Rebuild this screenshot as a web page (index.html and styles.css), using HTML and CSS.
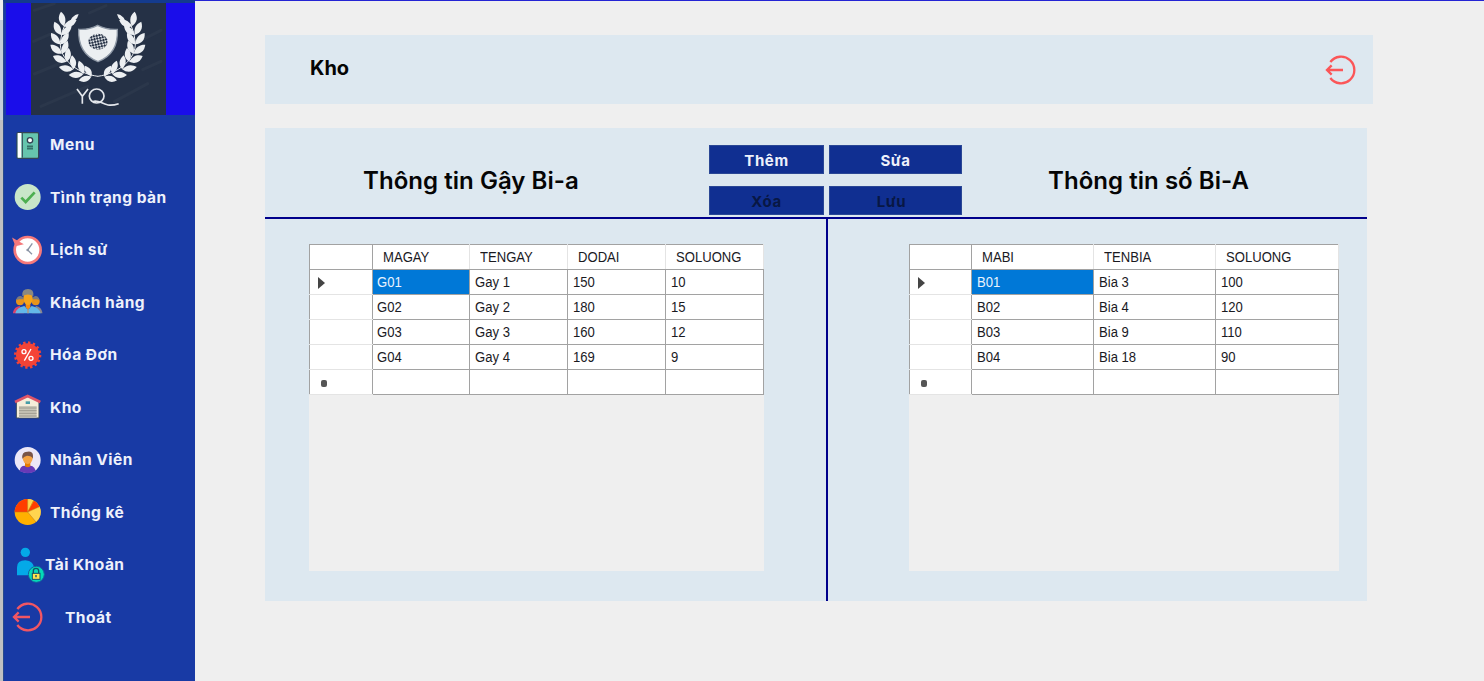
FILE: index.html
```html
<!DOCTYPE html>
<html lang="vi">
<head>
<meta charset="utf-8">
<title>Kho</title>
<link rel="stylesheet" href="styles.css">
</head>
<body>
<div class="edge"></div>
<aside class="sidebar">
  <div class="brand">
    <svg class="logo" viewBox="0 0 405 336">
      <defs>
        <g id="pair"><path d="M0 5C-19 4-30-9-28-29C-12-26-1-16 0 5Z"/><path d="M0 5C18 3 27-9 25-29C10-26 1-16 0 5Z"/></g>
        <g id="branch">
          <use href="#pair" transform="translate(177 219) rotate(-68) scale(.9)"/>
          <use href="#pair" transform="translate(153 210) rotate(-55)"/>
          <use href="#pair" transform="translate(124 195) rotate(-42)"/>
          <use href="#pair" transform="translate(104 172) rotate(-27)"/>
          <use href="#pair" transform="translate(92 147) rotate(-13)"/>
          <use href="#pair" transform="translate(88 119) rotate(0)"/>
          <use href="#pair" transform="translate(91 91) rotate(13)"/>
          <use href="#pair" transform="translate(101 65) rotate(28)"/>
          <path d="M101 66Q118 56 123 44Q136 32 143 34Q137 60 101 66Z"/>
          <path d="M201 220C140 212 86 170 88 119Q90 88 103 62" fill="none" stroke="#eceff2" stroke-width="3"/>
        </g>
        <pattern id="net" width="12" height="12" patternUnits="userSpaceOnUse" patternTransform="rotate(32)"><rect width="12" height="12" fill="#eceff2"/><rect width="7" height="7" fill="#253146"/><rect x="6" y="6" width="6" height="6" fill="#253146"/></pattern>
      </defs>
      <rect width="405" height="336" fill="#253146"/>
      <g fill="none" stroke="#2b374b" stroke-width="9" stroke-linecap="round"><path d="M10 22L70 2M8 115L82 83M10 213L90 180M30 310L170 250M175 30L225 8M250 296L350 242M330 112L390 82M335 200L390 175"/></g>
      <g fill="#eceff2"><use href="#branch"/><use href="#branch" transform="translate(401 0) scale(-1 1)"/>
      <path d="M143 79Q174 81 200 67Q227 81 259 79Q263 153 201 176Q140 153 143 79Z" stroke="#8e98a6" stroke-width="4"/></g>
      <ellipse cx="201" cy="116" rx="29" ry="24" fill="url(#net)"/>
      <g fill="none" stroke="#e4e7ec" stroke-width="5"><path d="M138 258L154 280L171 258M154 280V302"/><ellipse cx="197" cy="279" rx="22" ry="21"/><path d="M185 296C208 285 216 318 263 302"/></g>
    </svg>
  </div>
  <nav class="menu">
    <a class="item"><svg class="icon" viewBox="0 0 84 84"><rect x="9" y="5" width="65" height="77" rx="4" fill="#66c5ae" stroke="#344554" stroke-width="4"/><path d="M11 6H22V80H11Z" fill="#fff"/><path d="M25 6V80" stroke="#344554" stroke-width="3"/><circle cx="48" cy="28" r="8" fill="#fff" stroke="#344554" stroke-width="4"/><path d="M39 46H57M39 53H57" stroke="#347168" stroke-width="5"/></svg><span>Menu</span></a>
    <a class="item"><svg class="icon" viewBox="0 0 84 84"><circle cx="41" cy="42" r="39" fill="#c8e6c9"/><path d="M22 44L35 57L62 28" fill="none" stroke="#4caf50" stroke-width="8"/></svg><span>Tình trạng bàn</span></a>
    <a class="item"><svg class="icon" viewBox="0 0 84 84"><circle cx="41" cy="42" r="39" fill="#fff" stroke="#f5797b" stroke-width="8"/><path d="M-1 10L6 28L23 24Z" fill="#f5797b" stroke="#f5797b" stroke-width="5"/><path d="M55 22L41 42L54 55" fill="none" stroke="#8b94a5" stroke-width="4"/><circle cx="41" cy="42" r="4" fill="#8b94a5"/></svg><span>Lịch sử</span></a>
    <a class="item"><svg class="icon" viewBox="0 0 84 84"><path d="M-3 73Q0 57 17 54L30 76H-3Z" fill="#d8436d"/><path d="M85 73Q82 57 66 54L53 76H85Z" fill="#8a8790"/><circle cx="18" cy="40" r="12" fill="#e8941b"/><circle cx="65" cy="40" r="12" fill="#e8941b"/><path d="M8 36Q8 24 20 24Q29 26 28 34H15ZM75 36Q75 24 64 24Q55 26 56 34H69Z" fill="#7a7a80"/><path d="M35 44H49V58L42 66L35 58Z" fill="#f18c14"/><ellipse cx="42" cy="30" rx="14" ry="21" fill="#f6a51b"/><path d="M25 25Q22 3 42 3Q61 3 58 25Q42 14 25 25Z" fill="#8a8982"/><path d="M4 76Q8 58 31 54L42 66L53 54Q75 58 80 76Z" fill="#64b8e8"/><path d="M42 64V76" stroke="#a99a8b" stroke-width="5"/></svg><span>Khách hàng</span></a>
    <a class="item"><svg class="icon" viewBox="0 0 84 84"><circle cx="41" cy="42" r="35" fill="#f44336"/><circle cx="41" cy="42" r="37" fill="none" stroke="#f44336" stroke-width="8" stroke-dasharray="7 7.53"/><circle cx="30" cy="32" r="6" fill="none" stroke="#fff" stroke-width="4"/><circle cx="51" cy="52" r="6" fill="none" stroke="#fff" stroke-width="4"/><path d="M51 24L31 59" stroke="#fff" stroke-width="4"/></svg><span>Hóa Đơn</span></a>
    <a class="item"><svg class="icon" viewBox="0 0 84 84"><path d="M7 25L41 8L75 25V75H7Z" fill="#f5edd9" stroke="#39495a" stroke-width="3"/><path d="M3 27L41 9L79 27" fill="none" stroke="#dc5468" stroke-width="8"/><path d="M15 39H68V74H15Z" fill="#c9c6b7"/><path d="M15 45H68M15 53H68M15 61H68M15 69H68" stroke="#89877c" stroke-width="2"/><rect x="35" y="25" width="13" height="8" fill="#469da7"/></svg><span>Kho</span></a>
    <a class="item"><svg class="icon" viewBox="0 0 84 84"><circle cx="41" cy="42" r="39" fill="#ece8f7"/><path d="M17 76Q17 59 33 59H50Q62 61 65 75Q44 88 17 76Z" fill="#673ab7"/><path d="M33 48H49V61Q41 67 33 61Z" fill="#e67d00"/><ellipse cx="41" cy="36" rx="15" ry="18" fill="#f5a443"/><path d="M25 38Q22 16 41 17Q60 14 57 38Q53 29 39 29Q31 31 25 38Z" fill="#795548"/></svg><span>Nhân Viên</span></a>
    <a class="item"><svg class="icon" viewBox="0 0 84 84"><circle cx="41" cy="42" r="39" fill="#ffb000"/><path d="M41 42H2A39 39 0 0 1 41 3Z" fill="#ff3d00"/><path d="M41 42V3A39 39 0 0 1 58 7Z" fill="#ffd54f"/><path d="M41 42L60 8A39 39 0 0 1 77 26Z" fill="#ff3d00"/><path d="M41 42L77 26A39 39 0 0 1 66 72Z" fill="#ffd54f"/><path d="M2 42H41V3M41 42L66 72M41 42L59 7M41 42L77 26" fill="none" stroke="#b87722" stroke-width="1.5"/></svg><span>Thống kê</span></a>
    <a class="item account"><svg class="icon" viewBox="0 0 84 84"><circle cx="34" cy="4" r="14" fill="#04a9e8"/><path d="M9 73V49Q9 28 34 28Q60 30 60 53V73Z" fill="#04a9e8"/><circle cx="67" cy="70" r="24" fill="#04dab7" stroke="#11659f" stroke-width="3"/><path d="M58 67V59Q58 52 66 52Q74 52 74 59V67" fill="none" stroke="#14506b" stroke-width="4"/><rect x="55" y="67" width="23" height="18" fill="#ffe34c" stroke="#14506b" stroke-width="3"/><path d="M66 72V79" stroke="#14506b" stroke-width="4"/></svg><span>Tài Khoản</span></a>
    <a class="item exit"><svg class="icon" viewBox="0 0 84 84"><path d="M10 18A40 40 0 1 1 10 66M48 42H2M14 28L0 42L14 56" fill="none" stroke="#f15663" stroke-width="7"/></svg><span>Thoát</span></a>
  </nav>
</aside>
<main class="main">
  <header class="titlebar"><h1>Kho</h1><svg class="icon back" viewBox="0 0 84 84"><path d="M10 18A40 40 0 1 1 10 66M48 42H2M14 28L0 42L14 56" fill="none" stroke="#fb5658" stroke-width="7"/></svg></header>
  <section class="panel">
    <div class="panel-head">
      <h2 class="cue">Thông tin Gậy Bi-a</h2>
      <div class="buttons"><button>Thêm</button><button>Sửa</button><button disabled>Xóa</button><button class="save" disabled>Lưu</button></div>
      <h2 class="ball">Thông tin số Bi-A</h2>
    </div>
    <div class="panes">
      <div class="pane left"><div class="grid-area">
        <table class="cues">
          <colgroup><col class="mark"><col><col><col><col></colgroup>
          <tr><th></th><th><i>MAGAY</i></th><th><i>TENGAY</i></th><th><i>DODAI</i></th><th><i>SOLUONG</i></th></tr>
          <tr><td><b class="arrow"></b></td><td class="sel"><i>G01</i></td><td><i>Gay 1</i></td><td><i>150</i></td><td><i>10</i></td></tr>
          <tr><td></td><td><i>G02</i></td><td><i>Gay 2</i></td><td><i>180</i></td><td><i>15</i></td></tr>
          <tr><td></td><td><i>G03</i></td><td><i>Gay 3</i></td><td><i>160</i></td><td><i>12</i></td></tr>
          <tr><td></td><td><i>G04</i></td><td><i>Gay 4</i></td><td><i>169</i></td><td><i>9</i></td></tr>
          <tr><td><b class="dot"></b></td><td></td><td></td><td></td><td></td></tr>
        </table></div></div>
      <div class="pane right"><div class="grid-area">
        <table class="balls">
          <colgroup><col class="mark"><col><col><col></colgroup>
          <tr><th></th><th><i>MABI</i></th><th><i>TENBIA</i></th><th><i>SOLUONG</i></th></tr>
          <tr><td><b class="arrow"></b></td><td class="sel"><i>B01</i></td><td><i>Bia 3</i></td><td><i>100</i></td></tr>
          <tr><td></td><td><i>B02</i></td><td><i>Bia 4</i></td><td><i>120</i></td></tr>
          <tr><td></td><td><i>B03</i></td><td><i>Bia 9</i></td><td><i>110</i></td></tr>
          <tr><td></td><td><i>B04</i></td><td><i>Bia 18</i></td><td><i>90</i></td></tr>
          <tr><td><b class="dot"></b></td><td></td><td></td><td></td></tr>
        </table></div></div>
    </div>
  </section>
</main>
</body>
</html>
```
FILE: styles.css
```css
* { box-sizing: border-box; }
body { margin: 0; height: 681px; display: flex; overflow: hidden; background: #efefef; font-family: Inter, "Liberation Sans", sans-serif; }
.edge { width: 3px; background: linear-gradient(#efefef 20px, #c3cedb 20px, #c3cedb 120px, #bfc0c2 120px); }
.sidebar { width: 192px; background: #183aa5; border-top: 3px solid #143b8e; border-left: 1px solid #274a8d; }
.brand { height: 112px; margin-left: 1.5px; padding-left: 25px; background: #1a0dea; }
.logo { display: block; width: 135px; height: 112px; }
.menu { padding-top: 3.5px; }
.item { display: flex; align-items: center; height: 52.5px; padding-left: 9.5px; gap: 8.5px; color: #eef1fb; font-size: 15px; font-weight: 700; letter-spacing: .45px; white-space: nowrap; }
.item span { transform: scaleX(1.035); transform-origin: left; }
.icon { width: 28px; height: 28px; flex: none; overflow: visible; }
.account { gap: 3.5px; }
.exit { gap: 23.5px; }
.main { flex: 1; border-top: 1px solid #2424d4; padding: 34px 0 0 70px; }
.titlebar { width: 1108px; height: 69px; display: flex; align-items: center; justify-content: space-between; padding: 0 18px 0 45px; background: #dde8f0; }
.back { margin-top: 1px; }
h1, h2 { margin: 0; font-weight: 600; color: #050505; white-space: nowrap; }
h1 { font-size: 20px; font-weight: 700; margin-top: -3px; letter-spacing: 0; }
h2 { font-size: 24px; line-height: 30px; letter-spacing: .05px; }
.panel { width: 1102px; height: 473px; margin-top: 24px; background: #dde8f0; }
.panel-head { display: grid; grid-template-columns: 444px 253px 1fr; height: 91px; border-bottom: 2px solid #00008b; }
.cue { padding: 38px 0 0 98px; }
.ball { padding: 38px 0 0 86px; }
.buttons { display: grid; grid-template-columns: 115px 133px; grid-template-rows: 29px 29px; gap: 12px 5px; padding-top: 17px; }
button { border: 1px solid #2a4795; background: #102f91; color: #eef1fb; padding: 2px 0 0; font: 700 15px Inter, sans-serif; letter-spacing: .6px; }
button:disabled { color: #081744; }
.save { padding-right: 8px; }
.panes { display: grid; grid-template-columns: 562.5px 1fr; height: 382px; }
.pane { padding-top: 25px; }
.left { border-right: 2.5px solid #00008b; padding-left: 44px; }
.right { padding-left: 81px; }
.grid-area { height: 327px; background: #efefef; width: 455px; }
.right .grid-area { width: 430px; }
table { border-collapse: collapse; table-layout: fixed; width: 455px; background: #fff; font: 14px/17px "Liberation Sans", sans-serif; color: #1a1a1f; }
.balls { width: 430px; }
.mark { width: 62.5px; }
tr { height: 25px; }
th, td { border: 1px solid #a2a2a2; padding: 1px 0 0 4.5px; text-align: left; font-weight: 400; height: 25px; }
th { padding-left: 10px; border-left-color: #e4e4e4; border-right-color: #e4e4e4; }
th:first-child { border-left-color: #a2a2a2; border-right-color: #a2a2a2; }
td:first-child { border-bottom-color: #e4e4e4; padding-left: 8px; }
i { display: block; font-style: normal; transform: scaleX(.935); transform-origin: left; white-space: nowrap; }
.sel { background: #0078d7; color: #e8f3fd; }
.arrow { display: block; width: 0; border-left: 7px solid #444; border-top: 6px solid transparent; border-bottom: 6px solid transparent; }
.dot { display: block; width: 6px; height: 7px; margin: 2px 0 0 3px; border-radius: 2px; background: #555; }
```
